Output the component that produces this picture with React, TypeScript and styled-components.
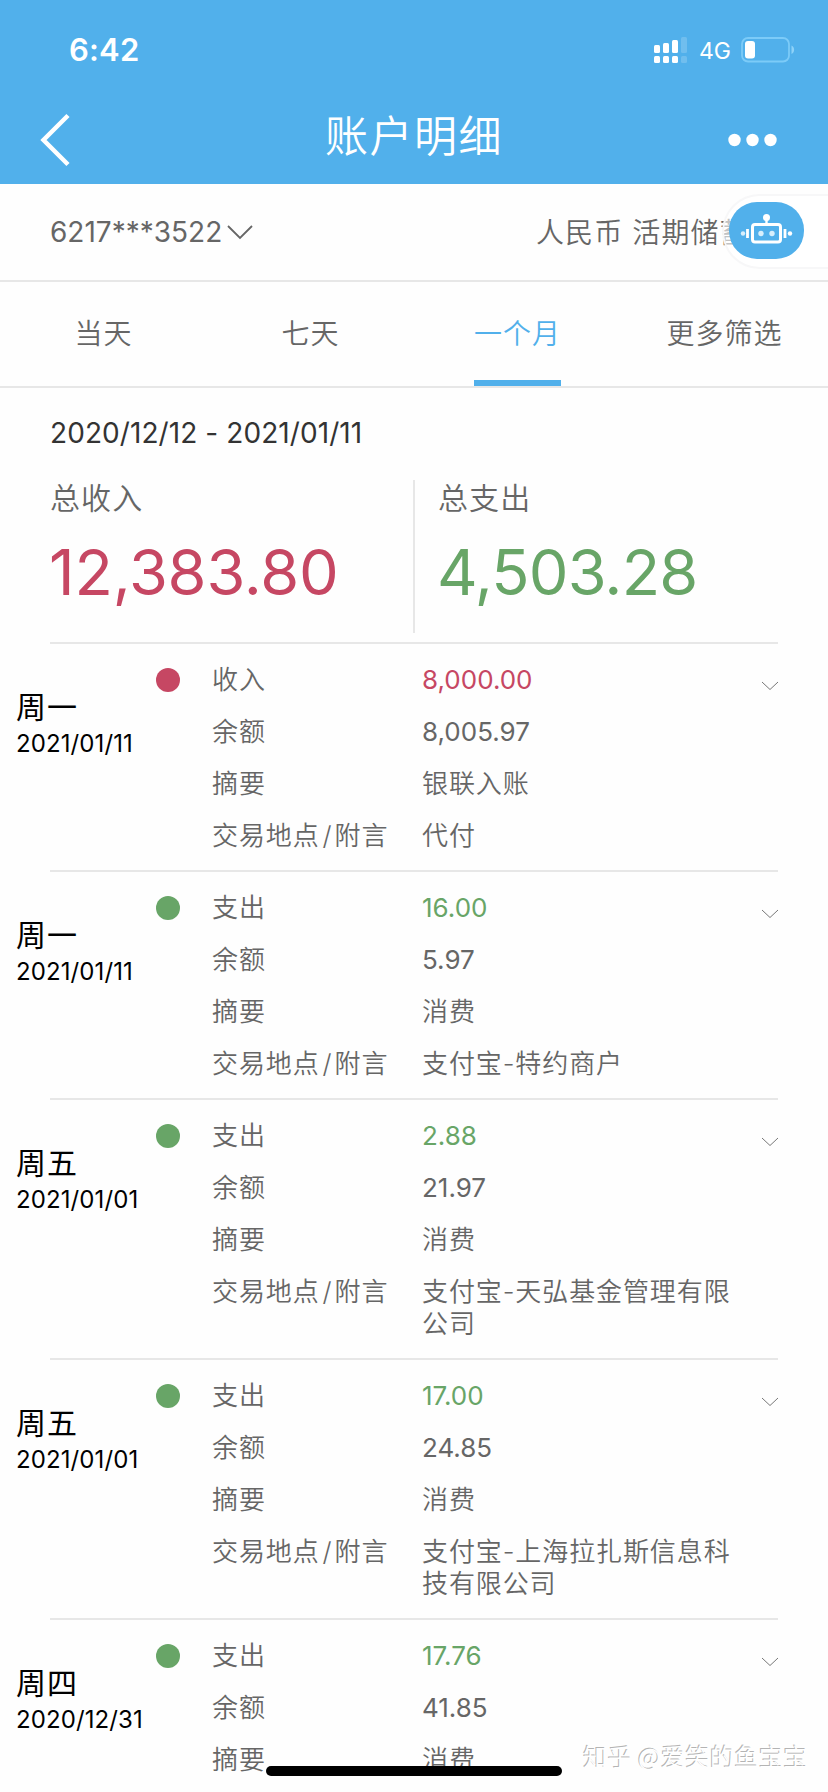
import React from "react";
import styled, { createGlobalStyle } from "styled-components";

const GlobalStyle = createGlobalStyle`
  * { box-sizing: border-box; }
  html, body { margin: 0; padding: 0; background: #fefefe; }
  body { overflow: hidden; }
`;

const BLUE = "#51b0eb";
const RED = "#c64763";
const GREEN = "#68a567";
const GREY = "#666";

const Screen = styled.div`
  position: relative;
  width: 828px;
  height: 1792px;
  overflow: hidden;
  background: #fefefe;
  color: ${GREY};
  font-family: Inter, "Noto Sans CJK SC", sans-serif;
  font-weight: 400;
  white-space: nowrap;
`;

const Header = styled.header`
  height: 184px;
  background: ${BLUE};
  color: #fff;
`;

const StatusBar = styled.div`
  display: flex;
  align-items: center;
  justify-content: space-between;
  height: 92px;
  padding: 8px 33px 0 69px;
`;

const Clock = styled.span`
  font-size: 31px;
  font-weight: 600;
  line-height: 40px;
  letter-spacing: 0.2px;
`;

const StatusIcons = styled.div`
  display: flex;
  align-items: center;
`;

const Network = styled.span`
  margin: 2px 10px 0 11px;
  font-size: 23px;
  line-height: 28px;
`;

const NavBar = styled.div`
  display: grid;
  grid-template-columns: 1fr auto 1fr;
  align-items: center;
  height: 88px;
  padding: 0 51px 0 40px;
`;

const Title = styled.h1`
  margin: 0;
  padding-left: 11px;
  font-size: 43px;
  font-weight: 350;
  line-height: 60px;
  letter-spacing: 1.5px;
`;

const BackIcon = styled.svg`
  margin-top: 8px;
`;

const MoreIcon = styled.svg`
  justify-self: end;
  margin-top: 8px;
`;

const AccountBar = styled.div`
  position: relative;
  display: flex;
  justify-content: space-between;
  align-items: center;
  height: 98px;
  padding: 0 50px;
  border-bottom: 2px solid #e7e7e7;
  font-size: 28px;
`;

const AccountNumber = styled.div`
  display: flex;
  align-items: center;
  gap: 5px;
`;

const AccountType = styled.div`
  width: 242px;
  overflow: hidden;
  margin-top: -2px;
  font-weight: 350;
  letter-spacing: 1.1px;
`;

const Assistant = styled.button`
  position: absolute;
  top: 10px;
  right: 0;
  width: 106px;
  height: 75px;
  border: 2px solid #f7f7f8;
  border-right: 0;
  border-radius: 38px 0 0 38px;
  background: rgba(255, 255, 255, 0.6);
`;

const AssistantFace = styled.span`
  position: absolute;
  top: 6px;
  left: 5px;
  display: block;
  width: 75px;
  height: 57px;
  border-radius: 28px;
  background: ${BLUE};
`;

const Tabs = styled.nav`
  display: flex;
  height: 106px;
  border-bottom: 2px solid #e7e7e7;
`;

const TabCell = styled.div`
  display: flex;
  flex: 1;
  justify-content: center;
`;

const Tab = styled.div<{ $active?: boolean }>`
  height: 104px;
  border-bottom: 6px solid ${(p) => (p.$active ? BLUE : "transparent")};
  color: ${(p) => (p.$active ? BLUE : GREY)};
  font-size: 28px;
  font-weight: 350;
  line-height: 104px;
  letter-spacing: 1px;
`;

const Summary = styled.section`
  padding: 25px 50px 0;
`;

const Period = styled.div`
  color: #333;
  font-size: 28px;
  line-height: 40px;
  letter-spacing: 0.08px;
`;

const Totals = styled.div`
  display: grid;
  grid-template-columns: 363px 2px 1fr;
  height: 153px;
  margin-top: 27px;
  margin-bottom: 9px;
`;

const TotalsDivider = styled.div`
  background: #e7e7e7;
`;

const Total = styled.div<{ $inset?: boolean }>`
  padding-left: ${(p) => (p.$inset ? "23px" : "0")};
`;

const TotalLabel = styled.div`
  margin-top: -2px;
  font-size: 30px;
  font-weight: 350;
  line-height: 40px;
  letter-spacing: 1.1px;
`;

const TotalAmount = styled.div<{ $color: string; $tracking: string }>`
  margin-top: 14px;
  margin-left: -1px;
  color: ${(p) => p.$color};
  font-size: 63px;
  font-weight: 380;
  line-height: 80px;
  letter-spacing: ${(p) => p.$tracking};
`;

const Divider = styled.hr`
  height: 2px;
  margin: 0 50px;
  border: 0;
  background: #e7e7e7;
`;

const Entry = styled.article`
  display: grid;
  grid-template-columns: 140px 24px 1fr 16px;
  align-items: start;
  padding: 10px 50px 8px 16px;
`;

const Day = styled.div`
  padding-top: 33px;
  color: #000;
`;

const Weekday = styled.div`
  font-size: 30px;
  line-height: 40px;
  letter-spacing: 1px;
`;

const DateText = styled.div`
  padding-top: 1px;
  font-size: 24px;
  line-height: 32px;
  letter-spacing: 0.1px;
`;

const Dot = styled.span<{ $color: string }>`
  width: 24px;
  height: 24px;
  margin-top: 14px;
  border-radius: 50%;
  background: ${(p) => p.$color};
`;

const Details = styled.dl`
  display: grid;
  grid-template-columns: 210px 320px;
  margin: 0 0 0 32px;
  font-size: 26px;
  line-height: 32px;
`;

const Label = styled.dt`
  padding: 10px 0;
  font-weight: 350;
  letter-spacing: 0.9px;
`;

const Slash = styled.span`
  margin: 0 2px 0 3px;
`;

const Value = styled.dd<{ $color?: string }>`
  margin: 0;
  padding: 10px 0;
  color: ${(p) => p.$color || GREY};
  white-space: pre-line;
`;

const TextValue = styled(Value)`
  font-weight: 350;
  letter-spacing: 0.9px;
`;

const EntryChevron = styled.svg`
  margin-top: 26px;
`;

const HomeIndicator = styled.div`
  position: absolute;
  left: 266px;
  bottom: 16px;
  width: 296px;
  height: 10px;
  border-radius: 5px;
  background: #000;
`;

const Watermark = styled.div`
  position: absolute;
  right: 20px;
  bottom: 18px;
  color: #fff;
  font-family: "Noto Sans CJK SC", sans-serif;
  font-size: 24px;
  font-weight: 350;
  line-height: 36px;
  letter-spacing: 0.5px;
  text-shadow: -1px -1px 0 #b4b4b4;
`;

const tabs = ["当天", "七天", "一个月", "更多筛选"];

type EntryData = {
  weekday: string;
  date: string;
  income?: boolean;
  amount: string;
  balance: string;
  memo: string;
  place: string;
};

const entries: EntryData[] = [
  { weekday: "周一", date: "2021/01/11", income: true, amount: "8,000.00", balance: "8,005.97", memo: "银联入账", place: "代付" },
  { weekday: "周一", date: "2021/01/11", amount: "16.00", balance: "5.97", memo: "消费", place: "支付宝-特约商户" },
  { weekday: "周五", date: "2021/01/01", amount: "2.88", balance: "21.97", memo: "消费", place: "支付宝-天弘基金管理有限\n公司" },
  { weekday: "周五", date: "2021/01/01", amount: "17.00", balance: "24.85", memo: "消费", place: "支付宝-上海拉扎斯信息科\n技有限公司" },
  { weekday: "周四", date: "2020/12/31", amount: "17.76", balance: "41.85", memo: "消费", place: "" },
];

function Signal() {
  return (
    <svg width="34" height="28" viewBox="0 0 34 28" fill="#fff">
      <rect x="0" y="9" width="6" height="8" rx="1.5" />
      <rect x="9" y="7" width="6" height="10" rx="1.5" />
      <rect x="18" y="4" width="6" height="13" rx="1.5" />
      <rect x="27" y="1" width="6" height="16" rx="1.5" opacity=".18" />
      <rect x="0" y="20" width="6" height="7" rx="1.5" />
      <rect x="9" y="20" width="6" height="7" rx="1.5" />
      <rect x="18" y="20" width="6" height="7" rx="1.5" />
      <rect x="27" y="20" width="6" height="7" rx="1.5" opacity=".18" />
    </svg>
  );
}

function Battery() {
  return (
    <svg width="54" height="26" viewBox="0 0 54 26">
      <rect x="1" y="1" width="47" height="23.5" rx="6" fill="none" stroke="#7ccbf8" strokeWidth="1.8" />
      <rect x="4" y="4" width="10" height="17.5" rx="3" fill="#fff" />
      <path d="M50.5 8.5v8.500c3.500-1.500 3.500-7 0-8.500z" fill="#8ed2f8" />
    </svg>
  );
}

function Robot() {
  return (
    <svg width="75" height="57" viewBox="0 0 75 57" fill="none" stroke="#fff">
      <circle cx="37.500" cy="15.500" r="3.500" fill="#fff" stroke="none" />
      <path d="M37.500 18v5" strokeWidth="2.400" />
      <rect x="23.500" y="22.500" width="28" height="17.500" rx="2.500" strokeWidth="3" />
      <circle cx="32" cy="31.500" r="2.700" fill="#d8effc" stroke="none" />
      <circle cx="43" cy="31.500" r="2.700" fill="#d8effc" stroke="none" />
      <path d="M18.500 27v9M56 27v9" strokeWidth="2.800" />
      <circle cx="14" cy="31.500" r="2.200" fill="#d8effc" stroke="none" />
      <circle cx="61" cy="31.500" r="2.200" fill="#fff" stroke="none" />
    </svg>
  );
}

export default function App() {
  return (
    <Screen>
      <GlobalStyle />
      <Header>
        <StatusBar>
          <Clock>6:42</Clock>
          <StatusIcons>
            <Signal />
            <Network>4G</Network>
            <Battery />
          </StatusIcons>
        </StatusBar>
        <NavBar>
          <BackIcon width="32" height="54" viewBox="0 0 32 54" fill="none" stroke="#fff" strokeWidth="4.500">
            <path d="M28 2.500 3.500 27 28 51.500" />
          </BackIcon>
          <Title>账户明细</Title>
          <MoreIcon width="49" height="14" viewBox="0 0 49 14" fill="#fff">
            <circle cx="6.500" cy="7" r="6.200" />
            <circle cx="24.500" cy="7" r="6.200" />
            <circle cx="42.500" cy="7" r="6.200" />
          </MoreIcon>
        </NavBar>
      </Header>

      <AccountBar>
        <AccountNumber>
          6217***3522
          <svg width="26" height="16" viewBox="0 0 26 16" fill="none" stroke="#666" strokeWidth="1.800">
            <path d="M1 2 13 14 25 2" />
          </svg>
        </AccountNumber>
        <AccountType>人民币 活期储蓄</AccountType>
        <Assistant>
          <AssistantFace>
            <Robot />
          </AssistantFace>
        </Assistant>
      </AccountBar>

      <Tabs>
        {tabs.map((t) => (
          <TabCell key={t}>
            <Tab $active={t === "一个月"}>{t}</Tab>
          </TabCell>
        ))}
      </Tabs>

      <Summary>
        <Period>2020/12/12 - 2021/01/11</Period>
        <Totals>
          <Total>
            <TotalLabel>总收入</TotalLabel>
            <TotalAmount $color={RED} $tracking="-0.2px">12,383.80</TotalAmount>
          </Total>
          <TotalsDivider />
          <Total $inset>
            <TotalLabel>总支出</TotalLabel>
            <TotalAmount $color={GREEN} $tracking="-0.8px">4,503.28</TotalAmount>
          </Total>
        </Totals>
      </Summary>

      {entries.map((e, i) => {
        const color = e.income ? RED : GREEN;
        return (
          <React.Fragment key={i}>
            <Divider />
            <Entry>
              <Day>
                <Weekday>{e.weekday}</Weekday>
                <DateText>{e.date}</DateText>
              </Day>
              <Dot $color={color} />
              <Details>
                <Label>{e.income ? "收入" : "支出"}</Label>
                <Value $color={color}>{e.amount}</Value>
                <Label>余额</Label>
                <Value>{e.balance}</Value>
                <Label>摘要</Label>
                <TextValue>{e.memo}</TextValue>
                {e.place && (
                  <>
                    <Label>
                      交易地点<Slash>/</Slash>附言
                    </Label>
                    <TextValue>{e.place}</TextValue>
                  </>
                )}
              </Details>
              <EntryChevron width="16" height="12" viewBox="0 0 16 12" fill="none" stroke="#777" strokeWidth="1">
                <path d="M0 2 8 9.500 16 2" />
              </EntryChevron>
            </Entry>
          </React.Fragment>
        );
      })}

      <HomeIndicator />
      <Watermark>知乎 @爱笑的鱼宝宝</Watermark>
    </Screen>
  );
}
